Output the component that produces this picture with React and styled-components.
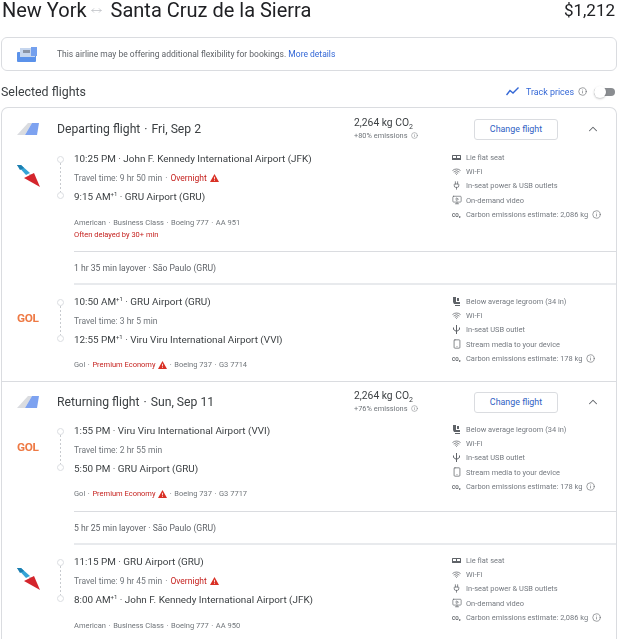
import React from "react";
import styled, { createGlobalStyle } from "styled-components";
import { Wifi, Plug, MonitorPlay, Smartphone, Info, ChevronUp, MoveHorizontal } from "lucide-react";

const Global = createGlobalStyle`
  html, body { margin: 0; padding: 0; background: #fff; }
  body { font-family: Roboto, "Liberation Sans", sans-serif; color: #3c4043; overflow: hidden; }
`;

const Page = styled.div`
  width: 616px;
  height: 639px;
  padding-left: 1px;
  filter: blur(0.35px);
`;
const TitleRow = styled.div`
  height: 37px;
  display: flex;
  align-items: flex-start;
  justify-content: space-between;
  line-height: 20px;
  color: #202124;
  padding: 0 2px 0 1px;
`;
const Route = styled.div`
  display: flex;
  align-items: center;
  font-size: 20px;
  svg { color: #b4b8bd; margin: 0 9px 0 4px; }
`;
const Price = styled.span`
  font-size: 17px;
`;
const Notice = styled.div`
  height: 32px;
  border: 1px solid #dadce0;
  border-radius: 6px;
  display: flex;
  align-items: center;
  padding-left: 15px;
  font-size: 8.5px;
  color: #5f6368;
`;
const NoticeText = styled.span`
  margin-left: 20px;
  a { color: #3367d6; text-decoration: none; }
`;
const SelectedRow = styled.div`
  height: 36px;
  box-sizing: border-box;
  padding: 5px 2px 0 0;
  display: flex;
  align-items: center;
  font-size: 12.4px;
  color: #3c4043;
`;
const SelectedLabel = styled.span`
  flex: 1;
`;
const Track = styled.span`
  display: flex;
  align-items: center;
  font-size: 8.9px;
  color: #3367d6;
  svg { display: block; }
`;
const TrackLabel = styled.span`
  margin: 0 4px 0 7px;
`;
const Toggle = styled.span`
  position: relative;
  display: block;
  width: 21px;
  height: 8px;
  margin-left: 7px;
  border-radius: 4px;
  background: #8a8d91;
  &::after {
    content: "";
    position: absolute;
    left: 0;
    top: -2px;
    width: 12px;
    height: 12px;
    border-radius: 50%;
    background: #fff;
    box-shadow: 0 1px 2px rgba(60, 64, 67, 0.3);
  }
`;
const Card = styled.div`
  width: 614px;
  min-height: 532px;
  border: 1px solid #dadce0;
  border-bottom: 0;
  border-radius: 7px 7px 0 0;
`;
const Head = styled.div`
  height: ${(p) => p.$h}px;
  display: flex;
  align-items: center;
  ${(p) => p.$rule && "border-top: 1px solid #dadce0;"}
`;
const HeadLogo = styled.div`
  width: 55px;
  padding-left: 15px;
  box-sizing: border-box;
  svg { display: block; }
`;
const HeadTitle = styled.div`
  width: 297px;
  font-size: 12.2px;
  color: #3c4043;
  span { margin: 0 4px; }
`;
const Emission = styled.div`
  width: 120px;
  margin-top: -1px;
`;
const Co2 = styled.div`
  font-size: 10.3px;
  line-height: 13px;
  color: #3c4043;
  sub { font-size: 7px; line-height: 0; }
`;
const Delta = styled.div`
  display: flex;
  align-items: center;
  gap: 3px;
  margin-top: 1px;
  font-size: 7.4px;
  line-height: 11px;
  color: #70757a;
`;
const ChangeButton = styled.button`
  width: 84px;
  height: 21px;
  padding: 0;
  background: #fff;
  border: 1px solid #dadce0;
  border-radius: 3px;
  font-family: inherit;
  font-size: 8.9px;
  font-weight: 400;
  color: #2f5fc4;
`;
const Collapse = styled.span`
  margin-left: 28px;
  color: #5f6368;
  svg { display: block; }
`;
const Leg = styled.div`
  display: grid;
  grid-template-columns: 55px 17px 1fr 164px;
  padding: ${(p) => p.$top}px 0 ${(p) => p.$bottom}px;
`;
const LogoCell = styled.div`
  padding: 15px 0 0 15px;
  svg { display: block; }
`;
const AirlineMark = styled.span`
  display: block;
  width: 23px;
  height: 20px;
  line-height: 20px;
  font-size: 11.8px;
  font-weight: 700;
  letter-spacing: -0.3px;
  color: #ee7a45;
`;
const Timeline = styled.div`
  display: flex;
  flex-direction: column;
  align-items: flex-start;
  padding-top: 6px;
`;
const Ring = styled.span`
  flex: none;
  width: 5px;
  height: 5px;
  border: 1px solid #dadce0;
  border-radius: 50%;
`;
const Dots = styled.span`
  flex: none;
  width: 1px;
  height: 29px;
  margin-left: 3px;
  background: repeating-linear-gradient(to bottom, #c8cbcf 0 2px, transparent 2px 4px);
`;
const Main = styled.div``;
const Stop = styled.div`
  height: 18px;
  line-height: 18px;
  font-size: 9.9px;
  color: #3c4043;
  white-space: nowrap;
  sup { font-size: 6px; line-height: 0; }
`;
const Travel = styled.div`
  height: 20px;
  display: flex;
  align-items: center;
  gap: 3px;
  font-size: 8.5px;
  color: #70757a;
`;
const Red = styled.span`
  color: #c5221f;
`;
const Details = styled.div`
  margin-top: ${(p) => p.$top}px;
  height: 12px;
  line-height: 12px;
  display: flex;
  align-items: center;
  gap: 2.6px;
  font-size: 7.5px;
  color: #70757a;
`;
const Delay = styled.div`
  height: 12px;
  line-height: 12px;
  font-size: 7.5px;
  color: #c5221f;
`;
const Amenities = styled.div`
  margin-top: ${(p) => p.$shift}px;
  font-size: 7.45px;
  color: #757a80;
`;
const Amenity = styled.div`
  height: 14.4px;
  display: flex;
  align-items: center;
`;
const AmenityIcon = styled.span`
  width: 14px;
  display: flex;
  color: #5f6368;
  font-size: 5px;
  font-weight: 700;
  svg { display: block; }
`;
const Layover = styled.div`
  height: 31px;
  margin-left: 72px;
  border-top: 1px solid #dadce0;
  border-bottom: 2px solid #e8eaed;
  display: flex;
  align-items: center;
  font-size: 8.6px;
  color: #5f6368;
`;

const Sep = () => <span>·</span>;
const Warn = () => (
  <svg width="9" height="8" viewBox="0 0 9 8"><path d="M4.500 0 9 8H0z" fill="#d93025" /><rect x="4.100" y="2.800" width=".8" height="2.600" fill="#fff" /><rect x="4.100" y="6" width=".8" height=".8" fill="#fff" /></svg>
);
const Tail = () => (
  <svg width="22" height="14" viewBox="0 0 22 14">
    <path d="M0 13 11 1h4L8 13z" fill="#dadce0" />
    <path d="M8 13 15 1h7l-2 12z" fill="#7da2f0" />
  </svg>
);
const AA = () => (
  <svg width="23" height="22" viewBox="0 0 23 22">
    <path d="M0 0h4l9 8-4 2z" fill="#35a4d6" />
    <path d="M0 0h4l3 3-4 2z" fill="#1c7fb0" />
    <path d="M12 9h5l-3 5z" fill="#c9ced4" />
    <path d="M17 8 23 22 7 13z" fill="#d4252c" />
  </svg>
);
const Gol = () => <AirlineMark>GOL</AirlineMark>;
const Flat = () => (
  <svg width="9" height="7" viewBox="0 0 9 7" fill="#5f6368"><rect x="0" y="1" width="9" height="5" rx=".5" /><rect x="1" y="2" width="3" height="2" fill="#fff" /><rect x="5" y="2" width="3" height="2" fill="#fff" /></svg>
);
const Seat = () => (
  <svg width="9" height="9" viewBox="0 0 9 9" fill="#5f6368"><path d="M1 0h3v5h4v2H2L1 5z" /><path d="M5 1h2v3H5zM3 8h5v1H3z" /></svg>
);
const UsbFork = () => (
  <svg width="9" height="9" viewBox="0 0 9 9" fill="none" stroke="#5f6368" strokeWidth="1"><path d="M4.500 0v9M1.500 2.500v2l3 2 3-2v-2" /></svg>
);

const ICONS = {
  flat: <Flat />,
  seat: <Seat />,
  wifi: <Wifi size={9} strokeWidth={2} />,
  plug: <Plug size={9} strokeWidth={2} />,
  usb: <UsbFork />,
  video: <MonitorPlay size={10} strokeWidth={1.6} />,
  phone: <Smartphone size={10} strokeWidth={1.8} />,
  co2: <span>CO₂</span>,
};
const LONG = [["flat", "Lie flat seat"], ["wifi", "Wi-Fi"], ["plug", "In-seat power & USB outlets"], ["video", "On-demand video"], ["co2", "Carbon emissions estimate: 2,086 kg", true]];
const SHORT = [["seat", "Below average legroom (34 in)"], ["wifi", "Wi-Fi"], ["usb", "In-seat USB outlet"], ["phone", "Stream media to your device"], ["co2", "Carbon emissions estimate: 178 kg", true]];

const AmenityList = ({ items, shift }) => (
  <Amenities $shift={shift}>
    {items.map(([k, t, info]) => (
      <Amenity key={t}>
        <AmenityIcon>{ICONS[k]}</AmenityIcon>
        <span>{t}</span>
        {info && <Info size={9} style={{ marginLeft: 4 }} color="#5f6368" strokeWidth={1.6} />}
      </Amenity>
    ))}
  </Amenities>
);

const FlightLeg = ({ logo, top, bottom, depart, arrive, travel, overnight, details, delay, items, gap, shift = 0 }) => (
  <Leg $top={top} $bottom={bottom}>
    <LogoCell>{logo}</LogoCell>
    <Timeline><Ring /><Dots /><Ring /></Timeline>
    <Main>
      <Stop>{depart}</Stop>
      <Travel>
        <span>Travel time: {travel}</span>
        {overnight && <><Sep /><Red>Overnight</Red><Warn /></>}
      </Travel>
      <Stop>{arrive}</Stop>
      <Details $top={gap}>{details}</Details>
      {delay && <Delay>{delay}</Delay>}
    </Main>
    <AmenityList items={items} shift={shift} />
  </Leg>
);

const SectionHead = ({ h, rule, title, date, delta }) => (
  <Head $h={h} $rule={rule}>
    <HeadLogo><Tail /></HeadLogo>
    <HeadTitle>{title}<span>·</span>{date}</HeadTitle>
    <Emission>
      <Co2>2,264 kg CO<sub>2</sub></Co2>
      <Delta>{delta} emissions <Info size={7} strokeWidth={1.6} /></Delta>
    </Emission>
    <ChangeButton>Change flight</ChangeButton>
    <Collapse><ChevronUp size={14} strokeWidth={1.8} /></Collapse>
  </Head>
);

const gol = (n) => <>Gol <Sep /> <Red>Premium Economy</Red> <Warn /> <Sep /> Boeing 737 <Sep /> G3 {n}</>;
const aa = (n) => <>American <Sep /> Business Class <Sep /> Boeing 777 <Sep /> AA {n}</>;

export default function App() {
  return (
    <Page>
      <Global />
      <TitleRow>
        <Route>
          <span>New York</span>
          <MoveHorizontal size={11} strokeWidth={1.5} />
          <span>Santa Cruz de la Sierra</span>
        </Route>
        <Price>$1,212</Price>
      </TitleRow>
      <Notice>
        <svg width="20" height="15" viewBox="0 0 20 15">
          <rect x="0" y="5" width="19" height="10" rx="1" fill="#5b92ea" />
          <rect x="3" y="1" width="15" height="9" fill="#c6d6ee" />
          <rect x="6" y="3" width="7" height="3" fill="#8a94a6" />
          <rect x="14" y="0" width="6" height="9" fill="#74a0ee" />
        </svg>
        <NoticeText>This airline may be offering additional flexibility for bookings. <a href="#more">More details</a></NoticeText>
      </Notice>
      <SelectedRow>
        <SelectedLabel>Selected flights</SelectedLabel>
        <Track>
          <svg width="13" height="9" viewBox="0 0 13 9" fill="none" stroke="#3367d6" strokeWidth="1.4"><path d="M.5 8 4 3.500 7 6l5.500-5.500" /></svg>
          <TrackLabel>Track prices</TrackLabel>
          <Info size={9} color="#5f6368" strokeWidth={1.6} />
        </Track>
        <Toggle />
      </SelectedRow>
      <Card>
        <SectionHead h={42} title="Departing flight" date="Fri, Sep 2" delta="+80%" />
        <FlightLeg logo={<AA />} top={0} bottom={10} depart="10:25 PM · John F. Kennedy International Airport (JFK)" arrive={<>9:15 AM<sup>+1</sup> · GRU Airport (GRU)</>} travel="9 hr 50 min" overnight details={aa(951)} delay="Often delayed by 30+ min" items={LONG} gap={11} />
        <Layover>1 hr 35 min layover · São Paulo (GRU)</Layover>
        <FlightLeg logo={<Gol />} top={8} bottom={10} shift={1} depart={<>10:50 AM<sup>+1</sup> · GRU Airport (GRU)</>} arrive={<>12:55 PM<sup>+1</sup> · Viru Viru International Airport (VVI)</>} travel="3 hr 5 min" details={gol(7714)} items={SHORT} gap={10} />
        <SectionHead h={40} rule title="Returning flight" date="Sun, Sep 11" delta="+76%" />
        <FlightLeg logo={<Gol />} top={0} bottom={11} depart="1:55 PM · Viru Viru International Airport (VVI)" arrive="5:50 PM · GRU Airport (GRU)" travel="2 hr 55 min" details={gol(7717)} items={SHORT} gap={10} />
        <Layover>5 hr 25 min layover · São Paulo (GRU)</Layover>
        <FlightLeg logo={<AA />} top={8} bottom={0} depart="11:15 PM · GRU Airport (GRU)" arrive={<>8:00 AM<sup>+1</sup> · John F. Kennedy International Airport (JFK)</>} travel="9 hr 45 min" overnight details={aa(950)} items={LONG} gap={11} />
      </Card>
    </Page>
  );
}
